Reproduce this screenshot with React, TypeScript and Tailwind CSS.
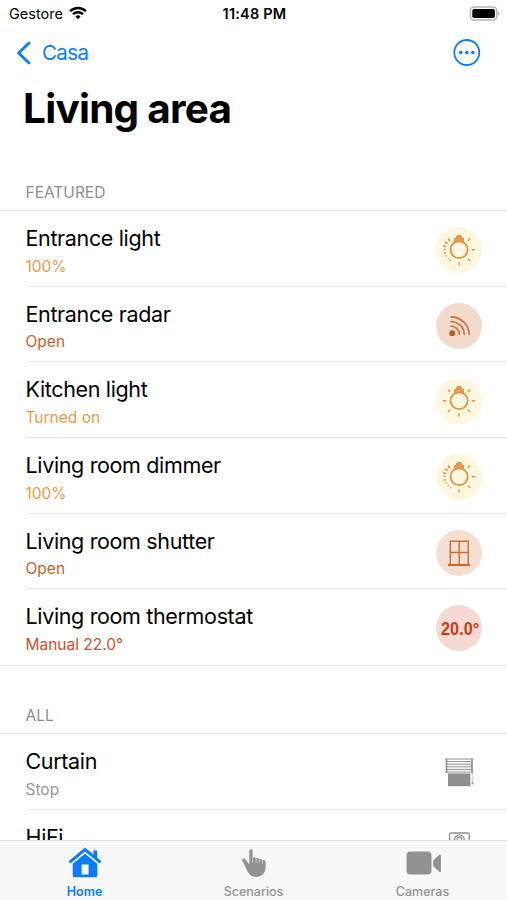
import type { ReactNode } from 'react';

type Device = {
  name: string;
  status?: string;
  color: string;
  badge: string;
  icon: ReactNode;
};

const Bulb = () => (
  <>
    <circle cx="23.1" cy="22.6" r="8.6" strokeWidth="1.8" />
    <path d="M18.8 15.6v-4h1.4c.3-1.8 1.2-3.200 2.900-3.200s2.600 1.400 2.900 3.200h1.400v4c-2.600-1.300-6-1.300-8.600 0z" fill="#e99b4e" strokeWidth="1.2" />
  </>
);

const LightIcon = () => (
  <svg viewBox="0 0 46 46" className="size-[46px]" fill="none" stroke="#e39245" strokeLinecap="round">
    <Bulb />
    <path
      d="M32.2 13.6l1.5-1.5M36.2 22.8h2.4M32.2 32l1.5 1.5M23 35.6v2.4M13.8 32l-1.5 1.5M9.8 22.8H7.4M13.8 13.6l-1.5-1.5"
      strokeWidth="1.4"
    />
  </svg>
);

const DimmerIcon = () => (
  <svg viewBox="0 0 46 46" className="size-[46px]" fill="none" stroke="#e39245" strokeLinecap="round">
    <Bulb />
    <path d="M32.2 13.6l1.5-1.5M36.2 22.8h2.4M32.2 32l1.5 1.5M23 35.6v2.4" strokeWidth="1.4" />
    {/* intensity scale on the left side */}
    <path d="M13.4 13.4l-.8-1.2M10.8 16.1l-1.2-.9M9.4 19.3l-1.4-.4" strokeWidth="1.9" />
    <path d="M8.9 22.6H8M9.4 25.8l-.9.2" strokeWidth="1.5" />
    <path d="M10.6 28.8l-.5.3M12.4 31.4l-.3.3M14.7 33.6l-.2.3" strokeWidth="1.1" />
  </svg>
);

const RadarIcon = () => (
  <svg viewBox="0 0 46 46" className="size-[46px]" fill="none" stroke="#c9794a" strokeWidth="1.8" strokeLinecap="round">
    <circle cx="16.2" cy="30.2" r="2.9" fill="#c4540f" stroke="none" />
    <path d="M15 23.2a8.4 8.4 0 0 1 8.4 8M15 18.6a13.2 13.2 0 0 1 13.3 12.6M15 14a18 18 0 0 1 18.2 17.2" />
  </svg>
);

const WindowIcon = () => (
  <svg viewBox="0 0 46 46" className="size-[46px]" fill="none" stroke="#ca6d2c" strokeWidth="1.4">
    <path d="M14.3 34V11.2h17.9V34M23.2 11.2V34M14.3 22.5h17.9" />
    <path d="M12 35h22.3" strokeWidth="2.2" />
  </svg>
);

const CurtainIcon = () => (
  <svg viewBox="0 0 46 46" className="size-[46px]" fill="none" stroke="#8e8e93">
    <path d="M9 9h28.4M10 11.6h26.4M10 14.2h26.4M10 16.8h26.4M10 19.4h26.4M9 22h28.4" strokeWidth="1" />
    <path d="M10.5 9v13.5M36 9v13.5" strokeWidth="1.6" />
    <path d="M12 23.4h22.4v12.8H12z" fill="#8e8e93" stroke="none" />
    <path d="M36.4 23v9" strokeWidth=".6" strokeDasharray="1.4 1" />
    <path d="M36.4 32v2.4" strokeWidth="1.6" />
  </svg>
);

const SpeakerIcon = () => (
  <svg viewBox="0 0 46 46" className="size-[46px]" fill="none" stroke="#8e8e93" strokeWidth="1.3">
    <rect x="13.6" y="7" width="19.6" height="30" rx="1.5" />
    <circle cx="23.4" cy="13.6" r="4.8" />
    <circle cx="23.4" cy="13.2" r="2.2" />
    <circle cx="23.4" cy="27" r="6" />
  </svg>
);

const featured: Device[] = [
  { name: 'Entrance light', status: '100%', color: 'text-[#eb9a45]', badge: 'bg-[#fff7e0]', icon: <DimmerIcon /> },
  { name: 'Entrance radar', status: 'Open', color: 'text-[#c8642a]', badge: 'bg-[#f2dacd]', icon: <RadarIcon /> },
  { name: 'Kitchen light', status: 'Turned on', color: 'text-[#eb9a45]', badge: 'bg-[#fff7e0]', icon: <LightIcon /> },
  { name: 'Living room dimmer', status: '100%', color: 'text-[#eb9a45]', badge: 'bg-[#fff7e0]', icon: <DimmerIcon /> },
  { name: 'Living room shutter', status: 'Open', color: 'text-[#c8642a]', badge: 'bg-[#f5dfd2]', icon: <WindowIcon /> },
  {
    name: 'Living room thermostat',
    status: 'Manual 22.0°',
    color: 'text-[#cf5029]',
    badge: 'bg-[#f5d9d2]',
    icon: (
      <span className="ml-[3px] mt-[2px] scale-x-[0.9] whitespace-nowrap font-['Liberation_Sans',sans-serif] text-[18px] font-bold text-[#c63d12]">
        20.0°
      </span>
    ),
  },
];

const all: Device[] = [
  { name: 'Curtain', status: 'Stop', color: 'text-[#98989c]', badge: '', icon: <CurtainIcon /> },
  { name: 'HiFi', color: 'text-[#98989c]', badge: '', icon: <SpeakerIcon /> },
];

function Section({ title, devices }: { title: string; devices: Device[] }) {
  return (
    <section>
      <h2 className="pl-[25.5px] text-[15.5px] leading-5 text-[#8e8e92]">{title}</h2>
      <ul className="mt-[7px] border-y border-[#e3e3e5]">
        {devices.map((device, i) => (
          <li key={device.name} className="flex h-[75.7px] pl-[25.5px]">
            <div
              className={`flex flex-1 items-start justify-between pr-[25px] ${
                i < devices.length - 1 ? 'border-b border-[#e8e8ea]' : ''
              }`}
            >
              <div className="pt-[13px]">
                <p className="text-[21.5px] leading-7 tracking-[-0.35px] text-black">{device.name}</p>
                {device.status && (
                  <p className={`mt-[4.5px] text-[15.5px] leading-5 ${device.color}`}>{device.status}</p>
                )}
              </div>
              <div className={`mt-4 flex size-[46px] items-center justify-center rounded-full ${device.badge}`}>
                {device.icon}
              </div>
            </div>
          </li>
        ))}
      </ul>
    </section>
  );
}

function StatusBar() {
  return (
    <div className="grid h-7 grid-cols-3 items-center pl-[9px] pr-[7px] text-black">
      <div className="flex items-center gap-[6px]">
        <span className="text-[14.5px] leading-5">Gestore</span>
        <svg viewBox="0 0 18 14" className="mb-[2px] h-[14px] w-[18px]" fill="none" stroke="currentColor">
          <path d="M1.1 5.1a11.4 11.4 0 0 1 15.8 0" strokeWidth="2.5" />
          <path d="M4 8.2a7.2 7.2 0 0 1 10 0" strokeWidth="2.4" />
          <path d="M9 13.2l-2.6-2.7a3.8 3.8 0 0 1 5.2 0z" fill="currentColor" stroke="none" />
        </svg>
      </div>
      <span className="text-center text-[14.5px] font-semibold leading-5 tracking-[0.2px]">11:48 PM</span>
      <svg viewBox="0 0 31 15" className="mb-[2px] h-[15px] w-[31px] justify-self-end">
        <rect x="1.4" y="1" width="26.4" height="13" rx="3.6" fill="#fff" stroke="#b5b5b5" strokeWidth="1.5" />
        <rect x="3.3" y="2.9" width="22.6" height="9.2" rx="1.8" fill="#000" />
        <path d="M29 5.4c2 .6 2 3.6 0 4.2z" fill="#b5b5b5" />
      </svg>
    </div>
  );
}

function TabBar() {
  return (
    <nav className="relative z-10 grid h-[60px] shrink-0 grid-cols-3 border-t border-[#dcdcdc] bg-[#f8f8f8] text-[12.5px] font-medium leading-4 text-[#929292]">
      <a className="flex flex-col items-center pt-[6px] font-semibold text-[#0a7cff]">
        <svg viewBox="0 0 34 32" className="h-8 w-[34px]" fill="currentColor">
          <path d="M17 .6L.6 14.2l1.8 2.3L17 4.5l14.6 12 1.8-2.3-4.2-3.5V3.6h-3.8v4z" />
          <path fillRule="evenodd" d="M17 6.7L4.7 16.8v11.4c0 1.4.8 2.1 2.1 2.1h20.4c1.3 0 2.1-.7 2.1-2.1V16.8zM13.6 17.4h7v10.2h-7z" />
        </svg>
        <span className="mt-[4.5px]">Home</span>
      </a>
      <a className="flex flex-col items-center pt-[6px]">
        <svg viewBox="0 0 34 32" className="h-8 w-[34px]" fill="currentColor">
          <path d="M12.3 4c0-2.5 3.3-2.5 3.3 0v7.4c.5-1.7 3.2-1.5 3.4.4.6-1.4 3.1-1.1 3.3.8.7-1.2 2.9-.8 3.1.8 1-1 2.9-.4 3.1 1.2.3 2.1.3 4.4 0 7-.5 4.9-4.1 8.3-9.1 8.3-4.500 0-7.500-2.300-9.300-6.400l-4.600-9.600c-.9-2 1.300-3.200 2.700-1.800l4.100 5.400z" />
          <path d="M15.7 11.4v4M19.1 12.2v3.6M22.4 13v3.2M25.5 13.8v2.8" stroke="#f8f8f8" strokeWidth=".6" />
        </svg>
        <span className="mt-[4.5px]">Scenarios</span>
      </a>
      <a className="flex flex-col items-center pt-[6px]">
        <svg viewBox="0 0 36 32" className="h-8 w-[36px]" fill="currentColor">
          <rect x="1.5" y="4.5" width="25" height="23" rx="4" />
          <path d="M28.2 13.6l6-5.8c.7-.7 1.7-.4 1.7.6v15.8c0 1-1 1.300-1.700.6l-6-5.800z" />
        </svg>
        <span className="mt-[4.5px]">Cameras</span>
      </a>
    </nav>
  );
}

export default function App() {
  return (
    <div className="flex h-[900px] w-[507px] flex-col overflow-hidden bg-white font-['Inter',sans-serif]">
      <StatusBar />
      <header className="px-[17px]">
        <div className="flex h-[50px] items-center justify-between pr-[9px]">
          <button className="flex items-center gap-[11px] text-[#0a7cff]">
            <svg viewBox="0 0 14 24" className="h-6 w-[14px]" fill="none" stroke="currentColor" strokeWidth="2.8" strokeLinecap="round" strokeLinejoin="round">
              <path d="M12 2L1.6 12 12 22" />
            </svg>
            <span className="text-[20.5px] leading-7 tracking-[-0.6px]">Casa</span>
          </button>
          <button className="text-[#0a7cff]">
            <svg viewBox="0 0 28 28" className="size-7" fill="none" stroke="currentColor" strokeWidth="1.8">
              <circle cx="13.8" cy="13.5" r="12.5" />
              <g fill="currentColor" stroke="none">
                <circle cx="7.7" cy="13.5" r="1.8" />
                <circle cx="13.8" cy="13.5" r="1.8" />
                <circle cx="19.9" cy="13.5" r="1.8" />
              </g>
            </svg>
          </button>
        </div>
        <h1 className="pl-[6px] pt-[6px] text-[40.5px] font-bold leading-[50px] tracking-[-0.75px] text-black">Living area</h1>
      </header>
      <main className="min-h-0 flex-1 overflow-hidden pt-[49px]">
        <Section title="FEATURED" devices={featured} />
        <div className="mt-[40px]">
          <Section title="ALL" devices={all} />
        </div>
      </main>
      <TabBar />
    </div>
  );
}
